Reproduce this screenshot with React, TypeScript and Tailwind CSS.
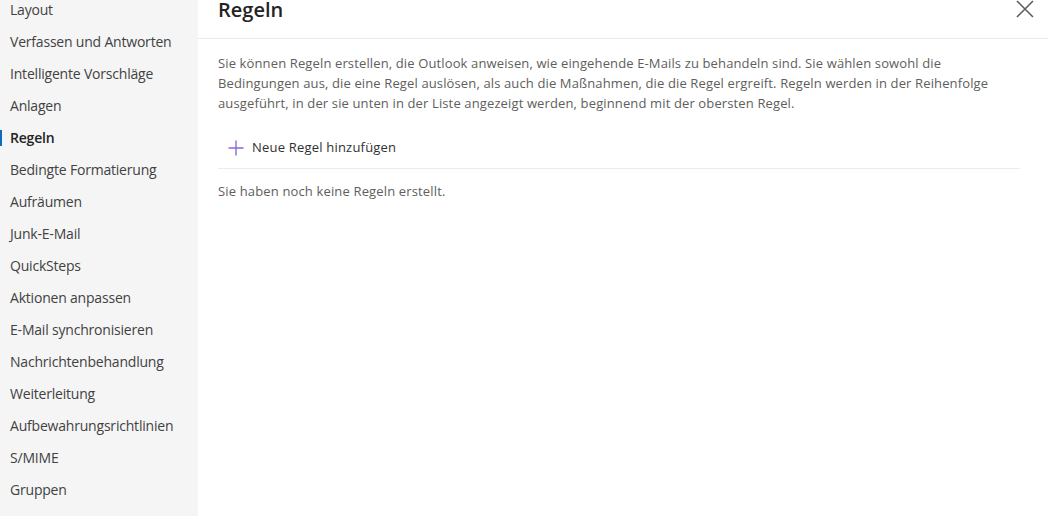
const navItems = [
  "Layout",
  "Verfassen und Antworten",
  "Intelligente Vorschläge",
  "Anlagen",
  "Regeln",
  "Bedingte Formatierung",
  "Aufräumen",
  "Junk-E-Mail",
  "QuickSteps",
  "Aktionen anpassen",
  "E-Mail synchronisieren",
  "Nachrichtenbehandlung",
  "Weiterleitung",
  "Aufbewahrungsrichtlinien",
  "S/MIME",
  "Gruppen",
];

const App = () => {
  return (
    <div className="flex h-[516px] w-[1048px] overflow-hidden bg-white font-['Open_Sans',sans-serif] text-[14px] text-[#323130]">
      {/* sidebar */}
      <nav className="w-[198px] shrink-0 bg-[#f5f5f5]">
        <ul className="-mt-[7px]">
          {navItems.map((item) => {
            const active = item === "Regeln";
            return (
              <li key={item} className="relative flex h-8 items-center pl-[10px]">
                {active && (
                  <span className="absolute left-0 top-[9px] h-[16px] w-[2px] bg-[#0f6cbd]" />
                )}
                <span
                  className={
                    active
                      ? "font-semibold text-[#242424] tracking-[-0.2px]"
                      : "text-[#424242] tracking-[-0.2px]"
                  }
                >
                  {item}
                </span>
              </li>
            );
          })}
        </ul>
      </nav>

      {/* main */}
      <main className="flex-1">
        <div className="flex h-[39px] items-center justify-between border-b border-[#edebe9] pl-5 pr-[14px]">
          <h1 className="-mt-[18px] text-[20px] font-semibold text-[#242424]">Regeln</h1>
          <button className="-mt-[21px] text-[#605e5c]">
            <svg width="18" height="18" viewBox="0 0 18 18" fill="none" stroke="currentColor" strokeWidth="1.6">
              <path d="M1 1 L17 17 M17 1 L1 17" />
            </svg>
          </button>
        </div>

        <div className="w-[822px] pl-5 pt-[14px]">
          <p className="text-[13px] leading-[20px] text-[#605e5c] tracking-[0.13px]">
            Sie können Regeln erstellen, die Outlook anweisen, wie eingehende E-Mails zu behandeln sind. Sie wählen sowohl die{" "}
            <br />
            Bedingungen aus, die eine Regel auslösen, als auch die Maßnahmen, die die Regel ergreift. Regeln werden in der Reihenfolge{" "}
            <br />
            ausgeführt, in der sie unten in der Liste angezeigt werden, beginnend mit der obersten Regel.
          </p>

          <div className="mt-[15px] flex h-[41px] items-center gap-[8px] border-b border-[#edebe9] pl-[10px]">
            <svg width="16" height="16" viewBox="0 0 16 16">
              <defs>
                <linearGradient id="plusg" x1="0" y1="0" x2="1" y2="1">
                  <stop offset="0" stopColor="#c05bd8" />
                  <stop offset="1" stopColor="#5b6fe0" />
                </linearGradient>
              </defs>
              <path d="M8 0.5 V15.5 M0.5 8 H15.5" stroke="url(#plusg)" strokeWidth="1.4" />
            </svg>
            <span className="text-[13px] text-[#323130] tracking-[0.2px]">Neue Regel hinzufügen</span>
          </div>

          <p className="mt-[13px] text-[13px] text-[#605e5c] tracking-[0.15px]">
            Sie haben noch keine Regeln erstellt.
          </p>
        </div>
      </main>
    </div>
  );
};

export default App;
